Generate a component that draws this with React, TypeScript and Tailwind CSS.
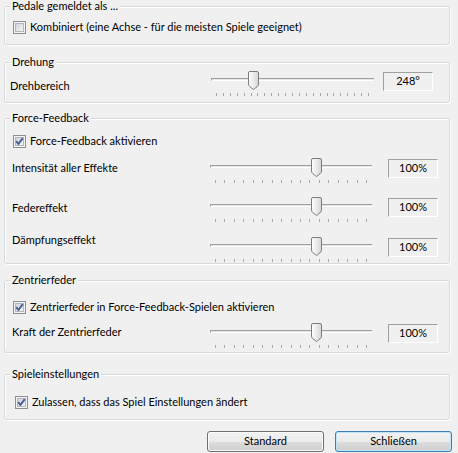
import React from "react";

function Check({ checked }: { checked: boolean }) {
  return (
    <svg width="13" height="13" viewBox="0 0 13 13" className="shrink-0">
      <defs>
        <linearGradient id="cbInner" x1="0" y1="0" x2="1" y2="1">
          <stop offset="0" stopColor="#cdd1d7" />
          <stop offset="1" stopColor="#f7f7f7" />
        </linearGradient>
      </defs>
      <rect x="0.5" y="0.5" width="12" height="12" fill="#f4f4f4" stroke="#8e8f8f" />
      <rect x="2.5" y="2.5" width="8" height="8" fill="url(#cbInner)" stroke="#b3b7bd" />
      {checked && (
        <path d="M3.2 6.2 L5.4 9 L9.8 3.2" stroke="#4a5f97" strokeWidth="2" fill="none" strokeLinejoin="round" />
      )}
    </svg>
  );
}

function CheckRow({ checked, label }: { checked: boolean; label: string }) {
  return (
    <div className="flex h-[16px] items-center gap-[4px] pl-[1px]">
      <Check checked={checked} />
      <span className="leading-[16px]">{label}</span>
    </div>
  );
}

function Thumb() {
  return (
    <svg width="11" height="19" viewBox="0 0 11 19">
      <defs>
        <linearGradient id="thumbFill" x1="0" y1="0" x2="1" y2="0">
          <stop offset="0" stopColor="#ffffff" />
          <stop offset="1" stopColor="#d6d6d6" />
        </linearGradient>
      </defs>
      <path
        d="M2 0.5 H9 A1.5 1.5 0 0 1 10.5 2 V13 Q10.5 14.5 9 15.8 L5.5 18.5 L2 15.8 Q0.5 14.5 0.5 13 V2 A1.5 1.5 0 0 1 2 0.5 Z"
        fill="url(#thumbFill)"
        stroke="#7b7b7b"
      />
    </svg>
  );
}

function Slider({ width, value, ticks }: { width: number; value: number; ticks: number }) {
  const left = Math.round(value * (width - 11));
  return (
    <div className="relative h-[25px] shrink-0" style={{ width }}>
      <div className="absolute left-0 right-0 top-[7px] h-[3px] border-t border-l border-[#9f9f9f] border-b border-b-white bg-[#e6e6e6]" />
      <div className="absolute top-0" style={{ left }}>
        <Thumb />
      </div>
      <div className="absolute left-0 right-0 top-[22px] flex justify-between px-[5px]">
        {Array.from({ length: ticks }).map((_, i) => (
          <div key={i} className="h-[3px] w-px bg-[#a8a8a8]" />
        ))}
      </div>
    </div>
  );
}

function ValueBox({ text, ml }: { text: string; ml: string }) {
  return (
    <div
      className={`${ml} mt-[1px] flex h-[19px] w-[50px] shrink-0 items-center justify-center border border-t-[#a0a0a0] border-l-[#a0a0a0] border-b-white border-r-white`}
    >
      {text}
    </div>
  );
}

function SliderRow({
  label,
  labelW,
  labelTop,
  sliderW,
  value,
  ticks,
  text,
  boxMl,
}: {
  label: string;
  labelW: string;
  labelTop: string;
  sliderW: number;
  value: number;
  ticks: number;
  text: string;
  boxMl: string;
}) {
  return (
    <div className="flex items-start">
      <div className={`${labelW} ${labelTop} shrink-0 leading-[16px]`}>{label}</div>
      <Slider width={sliderW} value={value} ticks={ticks} />
      <ValueBox text={text} ml={boxMl} />
    </div>
  );
}

function Group({ title, h, className, children }: { title: string; h: string; className?: string; children: React.ReactNode }) {
  return (
    <fieldset
      className={`${h} ${className ?? ""} rounded-[3px] border border-[#d5d9dd] shadow-[inset_1px_1px_0_#ffffff,1px_1px_0_#ffffff] pl-[7px]`}
    >
      <legend className="ml-[-2px] h-[12px] bg-[#f0f0f0] px-[2px] leading-[12px]">{title}</legend>
      {children}
    </fieldset>
  );
}

export default function App() {
  return (
    <div className="h-[453px] w-[458px] overflow-hidden bg-[#f0f0f0] pl-[4px] pr-[8px] font-['Lato','Segoe_UI',sans-serif] text-[11px] text-black">
      <Group title="Pedale gemeldet als ..." h="h-[45px]">
        <div className="pt-[7px]">
          <CheckRow checked={false} label="Kombiniert (eine Achse - für die meisten Spiele geeignet)" />
        </div>
      </Group>

      <Group title="Drehung" h="h-[47px]" className="mt-[11px]">
        <div className="pt-[3px]">
          <SliderRow
            label="Drehbereich"
            labelW="w-[201px] -ml-[2px]"
            labelTop="mt-[7px]"
            sliderW={163}
            value={0.243}
            ticks={23}
            text="248°"
            boxMl="ml-[9px]"
          />
        </div>
      </Group>

      <Group title="Force-Feedback" h="h-[152px]" className="mt-[9px]">
        <div className="pt-[9px]">
          <CheckRow checked={true} label="Force-Feedback aktivieren" />
        </div>
        <div className="mt-[9px]">
          <SliderRow
            label="Intensität aller Effekte"
            labelW="w-[198px]"
            labelTop="mt-[2px]"
            sliderW={162}
            value={0.672}
            ticks={17}
            text="100%"
            boxMl="ml-[16px]"
          />
        </div>
        <div className="mt-[14px]">
          <SliderRow
            label="Federeffekt"
            labelW="w-[198px]"
            labelTop="mt-[3px]"
            sliderW={162}
            value={0.672}
            ticks={17}
            text="100%"
            boxMl="ml-[16px]"
          />
        </div>
        <div className="mt-[15px]">
          <SliderRow
            label="Dämpfungseffekt"
            labelW="w-[198px]"
            labelTop="-mt-[5px]"
            sliderW={162}
            value={0.672}
            ticks={17}
            text="100%"
            boxMl="ml-[16px]"
          />
        </div>
      </Group>

      <Group title="Zentrierfeder" h="h-[79px]" className="mt-[10px]">
        <div className="pt-[13px]">
          <CheckRow checked={true} label="Zentrierfeder in Force-Feedback-Spielen aktivieren" />
        </div>
        <div className="mt-[8px]">
          <SliderRow
            label="Kraft der Zentrierfeder"
            labelW="w-[198px]"
            labelTop="mt-[1px]"
            sliderW={162}
            value={0.672}
            ticks={17}
            text="100%"
            boxMl="ml-[16px]"
          />
        </div>
      </Group>

      <Group title="Spieleinstellungen" h="h-[52px]" className="mt-[15px]">
        <div className="pt-[14px] pl-[2px]">
          <CheckRow checked={true} label="Zulassen, dass das Spiel Einstellungen ändert" />
        </div>
      </Group>

      <div className="mr-[-2px] mt-[11px] flex justify-end gap-[11px]">
        <button className="h-[21px] w-[117px] rounded-[3px] border border-[#707070] bg-[linear-gradient(#f2f2f2,#ebebeb_50%,#dddddd_50%,#cfcfcf)] shadow-[inset_0_0_0_1px_#fbfbfb]">
          Standard
        </button>
        <button className="h-[21px] w-[117px] rounded-[3px] border border-[#3c7fb1] bg-[linear-gradient(#f2f2f2,#ebebeb_50%,#dddddd_50%,#cfcfcf)] shadow-[inset_0_0_0_1px_#bfe4f8]">
          Schließen
        </button>
      </div>
    </div>
  );
}
